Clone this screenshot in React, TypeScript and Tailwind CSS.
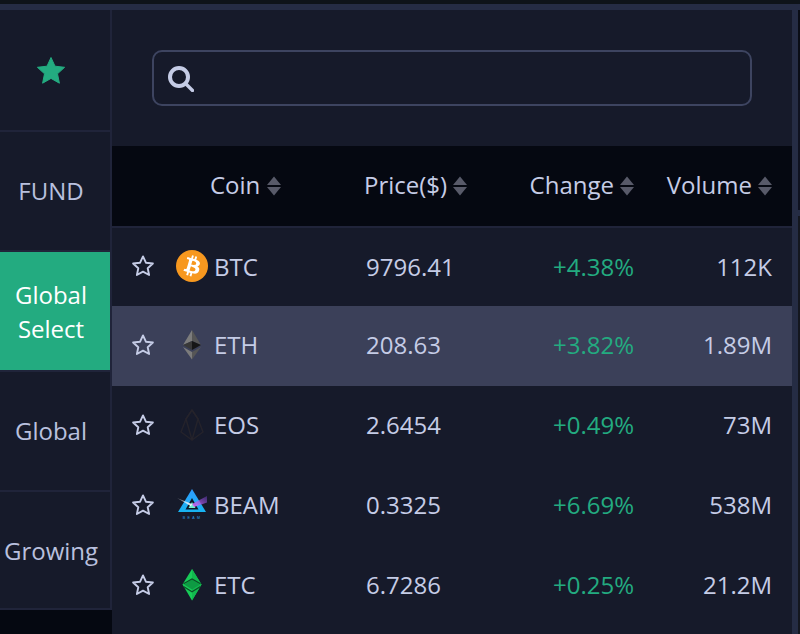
import React from "react";

const fontStack = "font-['Open_Sans','Noto_Sans',sans-serif]";

function Caret({ gap = "ml-[6px]" }: { gap?: string }) {
  return (
    <svg width="14" height="20" viewBox="0 0 14 20" className={`${gap} mt-[2px] shrink-0`}>
      <path d="M7 0.5 L14 9 H0 Z" fill="#585a69" />
      <path d="M0 11 H14 L7 19.5 Z" fill="#585a69" />
    </svg>
  );
}

function StarOutline() {
  return (
    <svg width="24" height="24" viewBox="0 0 24 24" fill="none" className="block">
      <path
        d="M12 2.4 L14.9 8.7 L21.9 9.5 L16.7 14.2 L18.1 21 L12 17.6 L5.9 21 L7.3 14.2 L2.1 9.5 L9.1 8.7 Z"
        stroke="#c5cce6"
        strokeWidth="1.9"
        strokeLinejoin="round"
      />
    </svg>
  );
}

function Btc() {
  return (
    <svg width="32" height="32" viewBox="0 0 32 32" className="block">
      <circle cx="16" cy="16" r="16" fill="#f7981f" />
      <path
        fill="#fff"
        transform="rotate(2 16 16) translate(-1.2 -1.2) scale(1.08)"
        d="M23.2 13.9c.3-2.1-1.3-3.2-3.5-4l.7-2.8-1.7-.4-.7 2.7-1.4-.3.7-2.8-1.7-.4-.7 2.8-1.1-.3-2.4-.6-.5 1.8s1.3.3 1.3.3c.7.2.8.6.8 1l-.8 3.2-1.1 4.4c-.1.2-.3.5-.8.4 0 0-1.3-.3-1.3-.3l-.9 2 2.3.6 1.2.3-.7 2.9 1.7.4.7-2.8 1.4.4-.7 2.8 1.7.4.7-2.9c3 .6 5.2.3 6.1-2.4.8-2.1 0-3.4-1.6-4.2 1.2-.3 2-1 2.3-2.7zm-4 5.6c-.5 2.1-4.2 1-5.4.7l1-3.8c1.2.3 5 .9 4.4 3.1zm.5-5.7c-.5 1.9-3.5.9-4.5.7l.9-3.5c1 .3 4.1.7 3.6 2.8z"
      />
    </svg>
  );
}

function Eth() {
  return (
    <svg width="20" height="30" viewBox="0 0 20 30" className="block">
      <path d="M10 0 L1 15 L10 11 Z" fill="#7c7c7c" />
      <path d="M10 0 L19 15 L10 11 Z" fill="#565656" />
      <path d="M10 11 L1 15 L10 20 Z" fill="#383838" />
      <path d="M10 11 L19 15 L10 20 Z" fill="#161616" />
      <path d="M1 17 L10 29.5 V22 Z" fill="#7c7c7c" />
      <path d="M19 17 L10 29.5 V22 Z" fill="#565656" />
    </svg>
  );
}

function Eos() {
  return (
    <svg width="24" height="32" viewBox="0 0 24 32" fill="none" stroke="#25232b" strokeWidth="1.4" strokeLinejoin="round" className="block">
      <path d="M12 1 L18 10 L23 23 L12 31 L1 23 L6 10 Z" />
      <path d="M12 1 L6 10 L12 31 L18 10 Z" />
    </svg>
  );
}

function Beam() {
  return (
    <svg width="32" height="32" viewBox="0 0 32 32" className="block">
      <defs>
        <linearGradient id="beamFill" x1="0.5" y1="0" x2="0.5" y2="1">
          <stop offset="0" stopColor="#2f9dff" />
          <stop offset="1" stopColor="#17b4f2" />
        </linearGradient>
        <linearGradient id="beamPurple" x1="0" y1="1" x2="1" y2="0">
          <stop offset="0" stopColor="#e070ff" />
          <stop offset="1" stopColor="#6a3fc0" stopOpacity="0.45" />
        </linearGradient>
        <linearGradient id="beamWhite" x1="1" y1="1" x2="0" y2="0">
          <stop offset="0" stopColor="#ffffff" />
          <stop offset="1" stopColor="#ffffff" stopOpacity="0.25" />
        </linearGradient>
      </defs>
      <path d="M16 0 L30 23 H2 Z" fill="url(#beamFill)" />
      <path d="M16 9 L22.5 20.5 H9.5 Z" fill="#0b1828" />
      <path d="M16 13 L19.5 19 H12.5 Z" fill="#6df0d0" />
      <path d="M1 9 L16 15 L15 17.2 Z" fill="url(#beamWhite)" />
      <path d="M16 15 L31 7 V13.5 L18 18 Z" fill="url(#beamPurple)" />
      <text x="16.6" y="30" textAnchor="middle" fontSize="3.6" letterSpacing="2.4" fill="#2a9fe8" fontFamily="Liberation Sans">BEAM</text>
    </svg>
  );
}

function Etc() {
  return (
    <svg width="20" height="32" viewBox="0 0 20 32" className="block">
      <path d="M10 0 L19.5 15.5 L10 31.5 L0.5 15.5 Z" fill="#18cc58" />
      <path d="M10 0 L19.5 15.5 L10 31.5 Z" fill="#12b84e" />
      <path d="M10 10.5 L18 15.5 L10 20.5 L2 15.5 Z" fill="#0e9a43" />
      <path d="M1.5 14.8 L10 10 L18.5 14.8 M1.5 17.5 L10 22.8 L18.5 17.5" fill="none" stroke="#0a4f26" strokeWidth="1.2" />
    </svg>
  );
}

const rows = [
  { name: "BTC", price: "9796.41", change: "+4.38%", volume: "112K", icon: <Btc />, h: "h-[78px]", text: "", glyph: "mb-[2px]", active: false },
  { name: "ETH", price: "208.63", change: "+3.82%", volume: "1.89M", icon: <Eth />, h: "h-[80px]", text: "pb-[2px]", glyph: "", active: true },
  { name: "EOS", price: "2.6454", change: "+0.49%", volume: "73M", icon: <Eos />, h: "h-[80px]", text: "pb-[2px]", glyph: "", active: false },
  { name: "BEAM", price: "0.3325", change: "+6.69%", volume: "538M", icon: <Beam />, h: "h-[80px]", text: "pb-[2px]", glyph: "", active: false },
  { name: "ETC", price: "6.7286", change: "+0.25%", volume: "21.2M", icon: <Etc />, h: "h-[80px]", text: "pb-[2px]", glyph: "", active: false },
];

function Tab({ children, active, h = "h-[118px]", extra = "" }: { children: React.ReactNode; active?: boolean; h?: string; extra?: string }) {
  return (
    <div
      className={`flex ${h} items-center justify-center pr-[8px] text-center text-[24px] leading-[34px] ${extra} ${
        active ? "bg-[#23ab80] text-white" : "text-[#b9c0de]"
      }`}
    >
      <div>{children}</div>
    </div>
  );
}

const Sep = () => <div className="h-[2px] bg-[#20243a]" />;

export default function App() {
  return (
    <div className={`flex h-[634px] w-[800px] flex-col overflow-hidden bg-[#161a2a] ${fontStack}`}>
      <div className="h-[4px] shrink-0 bg-[#0e1319]" />
      <div className="h-[6px] shrink-0 bg-[#252c44]" />
      <div className="flex min-h-0 flex-1">
        <aside className="flex w-[112px] shrink-0 flex-col">
          <div className="flex flex-1 flex-col border-r-2 border-[#20243a] pt-[2px]">
            <Tab>
              <svg width="30" height="30" viewBox="0 0 30 30" className="block">
                <path
                  d="M15 1.5 L19 10.2 L28.6 11.3 L21.5 17.8 L23.4 27.2 L15 22.4 L6.6 27.2 L8.5 17.8 L1.4 11.3 L11 10.2 Z"
                  fill="#23ab80"
                  stroke="#23ab80"
                  strokeLinejoin="round"
                />
              </svg>
            </Tab>
            <Sep />
            <Tab>FUND</Tab>
            <Sep />
            <Tab active extra="pt-[2px]">
              Global
              <br />
              Select
            </Tab>
            <Sep />
            <Tab>Global</Tab>
            <Sep />
            <Tab h="h-[116px]" extra="pt-[2px]">Growing</Tab>
          </div>
          <div className="h-[2px] bg-[#20243a]" />
          <div className="h-[24px] bg-[#050811]" />
        </aside>
        <main className="flex w-[680px] shrink-0 flex-col">
          <div className="h-[136px] shrink-0 pl-[40px] pt-[40px]">
            <div className="flex h-[56px] w-[600px] items-center rounded-[10px] border-2 border-[#3d4460] pl-[12px]">
              <svg width="28" height="28" viewBox="0 0 28 28" fill="none" stroke="#c5cce6" strokeLinecap="round" className="block">
                <circle cx="13" cy="13" r="9" strokeWidth="4" />
                <path d="M20 20 L26.5 26.5" strokeWidth="3.4" />
              </svg>
            </div>
          </div>
          <div className="flex h-[80px] items-center bg-[#050811] pb-[2px] pl-[98px] text-[24px] text-[#c5cce6]">
            <div className="flex w-[154px] items-center">Coin<Caret gap="ml-[7px]" /></div>
            <div className="flex w-[132px] items-center">Price($)<Caret /></div>
            <div className="flex w-[138px] items-center justify-end">Change<Caret /></div>
            <div className="flex w-[138px] items-center justify-end">Volume<Caret /></div>
          </div>
          <div className="h-[2px] bg-[#20243a]" />
          {rows.map((r) => (
            <div
              key={r.name}
              className={`flex ${r.h} shrink-0 items-center ${r.text} pl-[19px] text-[24px] text-[#c5cce6] ${r.active ? "bg-[#3b4059]" : ""}`}
            >
              <div className={`w-[45px] shrink-0 ${r.glyph}`}><StarOutline /></div>
              <div className={`flex w-[32px] shrink-0 justify-center ${r.glyph}`}>{r.icon}</div>
              <div className="ml-[6px] w-[152px] shrink-0">{r.name}</div>
              <div className="w-[130px] shrink-0">{r.price}</div>
              <div className="w-[138px] shrink-0 text-right text-[#23ab80]">{r.change}</div>
              <div className="w-[138px] shrink-0 text-right">{r.volume}</div>
            </div>
          ))}
        </main>
        <div className="w-[6px] shrink-0 bg-[#252c44]" />
        <div className="flex w-[2px] shrink-0 flex-col">
          <div className="h-[80px] bg-[#0a0d16]" />
          <div className="h-[120px] bg-[#0f1220]" />
          <div className="h-[6px] bg-[#252c44]" />
          <div className="flex-1 bg-[#14171f]" />
        </div>
      </div>
    </div>
  );
}
